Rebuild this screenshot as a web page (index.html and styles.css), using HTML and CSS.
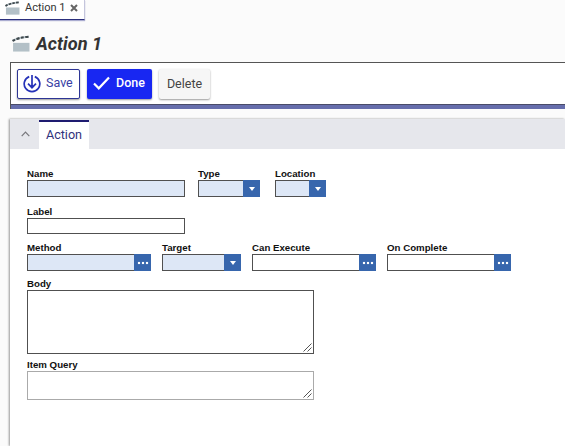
FILE: index.html
```html
<!DOCTYPE html>
<html lang="en">
<head>
<meta charset="utf-8">
<title>Action 1</title>
<link rel="stylesheet" href="styles.css">
</head>
<body>
<svg width="0" height="0" class="defs">
  <symbol id="clapper" viewBox="0 0 17 16">
    <path d="M1 7.4H16.5V15.6H1Z" fill="#b3c0c7"/>
    <path d="M.5 5.6Q6 2.2 16 1.6" fill="none" stroke="#b3c0c7" stroke-width="2"/>
    <path d="M.5 5.6Q6 2.2 16 1.6" fill="none" stroke="#3f484c" stroke-width="2" stroke-dasharray="2.8 1.5"/>
  </symbol>
</svg>
<nav class="tabs">
  <div class="tab">
    <svg class="tab-icon"><use href="#clapper"/></svg>
    <span>Action 1</span>
    <svg class="close" viewBox="0 0 8 8"><path d="M1 1 7 7M7 1 1 7" stroke="#666" stroke-width="2"/></svg>
  </div>
</nav>
<header class="title">
  <svg class="title-icon"><use href="#clapper"/></svg>
  <h1>Action 1</h1>
</header>
<div class="toolbar">
  <button class="btn save">
    <svg width="18" height="18" viewBox="0 0 18 18" fill="none" stroke="#2632b8" stroke-width="1.7"><path d="M6.2 1.6A7.8 7.8 0 1 0 11.8 1.6M9 0V12.5M5 8.7 9 12.7 13 8.7"/></svg>
    <span>Save</span>
  </button>
  <button class="btn done">
    <svg width="17" height="14" viewBox="0 0 17 14" fill="none" stroke="#fff" stroke-width="2.2"><path d="M1 7.5 5.8 12.3 16 1.5"/></svg>
    <span>Done</span>
  </button>
  <button class="btn delete">Delete</button>
</div>
<main class="panel">
  <div class="panel-tabs">
    <svg class="chevron" viewBox="0 0 9 6"><path d="M.7 5.2 4.5 1.2 8.3 5.2" fill="none" stroke="#77777c" stroke-width="1.2"/></svg>
    <div class="panel-tab">Action</div>
  </div>
  <form class="form">
    <div class="row row-name">
      <div class="field w-name"><label>Name</label><div class="box required"></div></div>
      <div class="field w-type"><label>Type</label><div class="box required"><i class="pick arrow"></i></div></div>
      <div class="field w-location"><label>Location</label><div class="box required"><i class="pick arrow"></i></div></div>
    </div>
    <div class="row row-label">
      <div class="field w-name"><label>Label</label><div class="box short"></div></div>
    </div>
    <div class="row row-method">
      <div class="field w-lookup"><label>Method</label><div class="box required"><i class="pick dots"><b></b><b></b><b></b></i></div></div>
      <div class="field w-target"><label>Target</label><div class="box required"><i class="pick arrow"></i></div></div>
      <div class="field w-lookup"><label>Can Execute</label><div class="box"><i class="pick dots"><b></b><b></b><b></b></i></div></div>
      <div class="field w-lookup"><label>On Complete</label><div class="box"><i class="pick dots"><b></b><b></b><b></b></i></div></div>
    </div>
    <div class="row">
      <div class="field w-area"><label>Body</label><div class="box area body">
        <svg class="grip" viewBox="0 0 9 9"><path d="M.5 8.5 8.5.5M4.5 8.5 8.5 4.5"/></svg></div></div>
    </div>
    <div class="row row-query">
      <div class="field w-area"><label>Item Query</label><div class="box area query">
        <svg class="grip" viewBox="0 0 9 9"><path d="M.5 8.5 8.5.5M4.5 8.5 8.5 4.5"/></svg></div></div>
    </div>
  </form>
</main>
</body>
</html>
```
FILE: styles.css
```css
* { box-sizing: border-box; }
body {
  margin: 0;
  height: 446px;
  overflow: hidden;
  display: flex;
  flex-direction: column;
  background: #fbfbfb;
  font-family: Roboto, sans-serif;
}
svg { display: block; flex: none; }
.defs { position: absolute; }
.tabs { height: 21px; display: flex; flex: none; }
.tab {
  width: 85px;
  height: 20px;
  padding: 0 6px 4px 5px;
  display: flex;
  align-items: center;
  background: #fff;
  border-right: 1px solid #c4c5dc;
  border-bottom: 1px solid #2b2f7c;
  box-shadow: 0 1px 1px #aaacd0;
  font-size: 11px;
  line-height: 14px;
  color: #333;
}
.tab-icon { width: 15px; height: 14px; }
.tab span { width: 39px; margin-left: 5px; white-space: nowrap; }
.close { width: 8px; height: 8px; margin-left: 6px; margin-top: 1px; }
.title {
  height: 41px;
  flex: none;
  display: flex;
  align-items: center;
  padding: 4px 0 0 12px;
}
.title-icon { width: 18px; height: 17px; }
h1 {
  margin: 0 0 0 6px;
  font-size: 18.2px;
  line-height: 22px;
  font-style: italic;
  font-weight: 700;
  color: #333;
}
.toolbar {
  height: 47px;
  flex: none;
  margin-left: 10px;
  padding: 6px 0 0 6px;
  display: flex;
  align-items: flex-start;
  background: #fff;
  border-top: 1px solid #555;
  border-left: 1px solid #555;
  box-shadow: inset 0 -4px #666eac, inset 0 -5px #4a4c68;
}
.btn {
  height: 30px;
  padding: 0;
  display: flex;
  align-items: center;
  border: 0;
  border-radius: 2px;
  font: 12.5px/16px Roboto, sans-serif;
  box-shadow: 0 1px 2px rgba(0, 0, 0, .4);
}
.save {
  width: 63px;
  padding-left: 5px;
  gap: 5px;
  border: 1px solid #2d3595;
  background: #fff;
  color: #3840a4;
}
.save svg { margin-bottom: 1px; }
.save span, .done span { padding-bottom: 2px; }
.done {
  width: 65px;
  margin-left: 7px;
  padding-left: 6px;
  gap: 6px;
  background: #1827f2;
  color: #fff;
  font-weight: 500;
}
.done svg { margin-bottom: 2px; }
.delete {
  width: 51px;
  margin-left: 7px;
  justify-content: center;
  background: #f6f6f6;
  color: #444;
}
.panel {
  flex: 1;
  margin: 10px 0 0 10px;
  background: #fff;
  box-shadow: -1px 0 2px rgba(0, 0, 0, .4);
}
.panel-tabs { height: 30px; display: flex; align-items: flex-end; background: #e6e7ec; }
.chevron { width: 9px; height: 6px; margin: 0 9px 12px 11px; }
.panel-tab {
  width: 50px;
  height: 29px;
  background: #fff;
  border-top: 2px solid #1e1b70;
  color: #30327c;
  font-size: 12.6px;
  line-height: 26px;
  text-align: center;
}
.form {
  padding: 19px 0 0 17px;
  font: bold 9.7px/12px "Liberation Sans", Arial, sans-serif;
  color: #111;
}
.row { display: flex; }
.row-name { gap: 13px; }
.row-name .w-location { margin-left: 2px; }
.row-label { margin-top: 9px; }
.row-method { gap: 11px; margin-top: 8px; }
.row-query { margin-top: 5px; }
label { display: block; height: 12px; white-space: nowrap; }
.w-name { width: 158px; }
.w-type { width: 62px; }
.w-location { width: 51px; }
.w-lookup { width: 124px; }
.w-target { width: 79px; }
.w-area { width: 287px; }
.box {
  height: 17px;
  display: flex;
  justify-content: flex-end;
  background: #fff;
  border: 1px solid #505050;
}
.required { background: #dde7f6; }
.short { height: 16px; }
.pick {
  width: 17px;
  height: 17px;
  margin: -1px -1px 0 0;
  display: flex;
  align-items: center;
  justify-content: center;
  gap: 2px;
  background: #3766ad;
}
.arrow::after {
  content: "";
  border: solid transparent;
  border-width: 4px 3.5px 0;
  border-top-color: #fff;
}
.dots b { width: 2px; height: 2px; margin-top: 1px; background: #fff; box-shadow: 0 0 1px #c5d6f0; }
.area { align-items: flex-end; }
.body { height: 64px; }
.query { height: 29px; border-color: #aaa; }
.row-method + .row { margin-top: 7px; }
.grip { width: 9px; height: 9px; margin: 0 1px 1px 0; fill: none; stroke: #555; stroke-width: 1; }
```
